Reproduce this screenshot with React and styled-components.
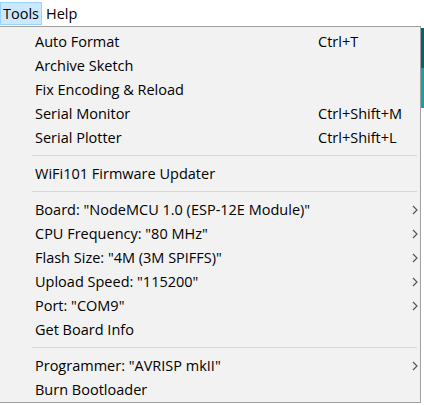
import React from "react";
import styled, { createGlobalStyle } from "styled-components";

const GlobalStyle = createGlobalStyle`
  html, body {
    margin: 0;
    padding: 0;
    background: #fff;
    overflow: hidden;
  }
  body {
    font-family: "Open Sans", "Noto Sans", sans-serif;
  }
`;

const Window = styled.div`
  position: relative;
  width: 424px;
  height: 405px;
  overflow: hidden;
  background: #fff;
`;

const MenuBar = styled.div`
  display: flex;
  height: 26px;
  align-items: center;
  background: #fff;
`;

const MenuTitle = styled.div`
  height: 23px;
  box-sizing: border-box;
  display: flex;
  align-items: center;
  padding: 0 ${(p) => (p.$open ? "2px" : "3px")};
  font-size: 14.5px;
  color: #000;
  background: ${(p) => (p.$open ? "#cce8ff" : "transparent")};
  border: 1px solid ${(p) => (p.$open ? "#99d1ff" : "transparent")};
  margin-top: 1px;
`;

const Toolbar = styled.div`
  height: 40px;
  margin-top: 2px;
  background: #006468;
`;

const TabStrip = styled.div`
  height: 40px;
  background: #17a1a5;
`;

const Editor = styled.div`
  flex: 1;
  background: #fff;
`;

const Dropdown = styled.div`
  position: absolute;
  left: -1px;
  top: 26px;
  width: 422px;
  box-sizing: border-box;
  background: #f2f2f2;
  border: 1px solid #a0a0a0;
  padding: 3px 0 0 0;
  display: flex;
  flex-direction: column;
`;

const Item = styled.div`
  height: 24px;
  box-sizing: border-box;
  padding-bottom: 2px;
  display: grid;
  grid-template-columns: 283px 93px 1fr;
  align-items: center;
  padding-left: 35px;
  font-size: 14.5px;
  color: #000;
  white-space: nowrap;
`;

const Shortcut = styled.span`
  color: #000;
`;

const Arrow = styled.svg`
  width: 6px;
  height: 10px;
  justify-self: start;
  margin-left: 1px;
  margin-top: 2px;
`;

const Separator = styled.div`
  height: 12px;
  display: flex;
  align-items: center;
  padding-left: 32px;
  padding-right: 3px;
  &::after {
    content: "";
    flex: 1;
    height: 1px;
    background: #d7d7d7;
    margin-top: ${(p) => p.$offset || 0}px;
  }
`;

const items = [
  { label: "Auto Format", shortcut: "Ctrl+T" },
  { label: "Archive Sketch" },
  { label: "Fix Encoding & Reload" },
  { label: "Serial Monitor", shortcut: "Ctrl+Shift+M" },
  { label: "Serial Plotter", shortcut: "Ctrl+Shift+L" },
  { sep: true },
  { label: "WiFi101 Firmware Updater" },
  { sep: true },
  { label: 'Board: "NodeMCU 1.0 (ESP-12E Module)"', sub: true },
  { label: 'CPU Frequency: "80 MHz"', sub: true },
  { label: 'Flash Size: "4M (3M SPIFFS)"', sub: true },
  { label: 'Upload Speed: "115200"', sub: true },
  { label: 'Port: "COM9"', sub: true },
  { label: "Get Board Info" },
  { sep: true },
  { label: 'Programmer: "AVRISP mkII"', sub: true },
  { label: "Burn Bootloader" },
];

function ChevronIcon() {
  return (
    <Arrow viewBox="0 0 6 10">
      <polyline points="1,1 5,5 1,9" fill="none" stroke="#555" strokeWidth="1.2" />
    </Arrow>
  );
}

export default function App() {
  return (
    <>
      <GlobalStyle />
      <Window>
        <MenuBar>
          <MenuTitle $open>Tools</MenuTitle>
          <MenuTitle>Help</MenuTitle>
        </MenuBar>
        <Toolbar />
        <TabStrip />
        <Editor />
        <Dropdown>
          {items.map((it, i) =>
            it.sep ? (
              <Separator key={i} $offset={-1} />
            ) : (
              <Item key={i}>
                <span>{it.label}</span>
                <Shortcut>{it.shortcut || ""}</Shortcut>
                {it.sub ? <ChevronIcon /> : <span />}
              </Item>
            )
          )}
        </Dropdown>
      </Window>
    </>
  );
}
